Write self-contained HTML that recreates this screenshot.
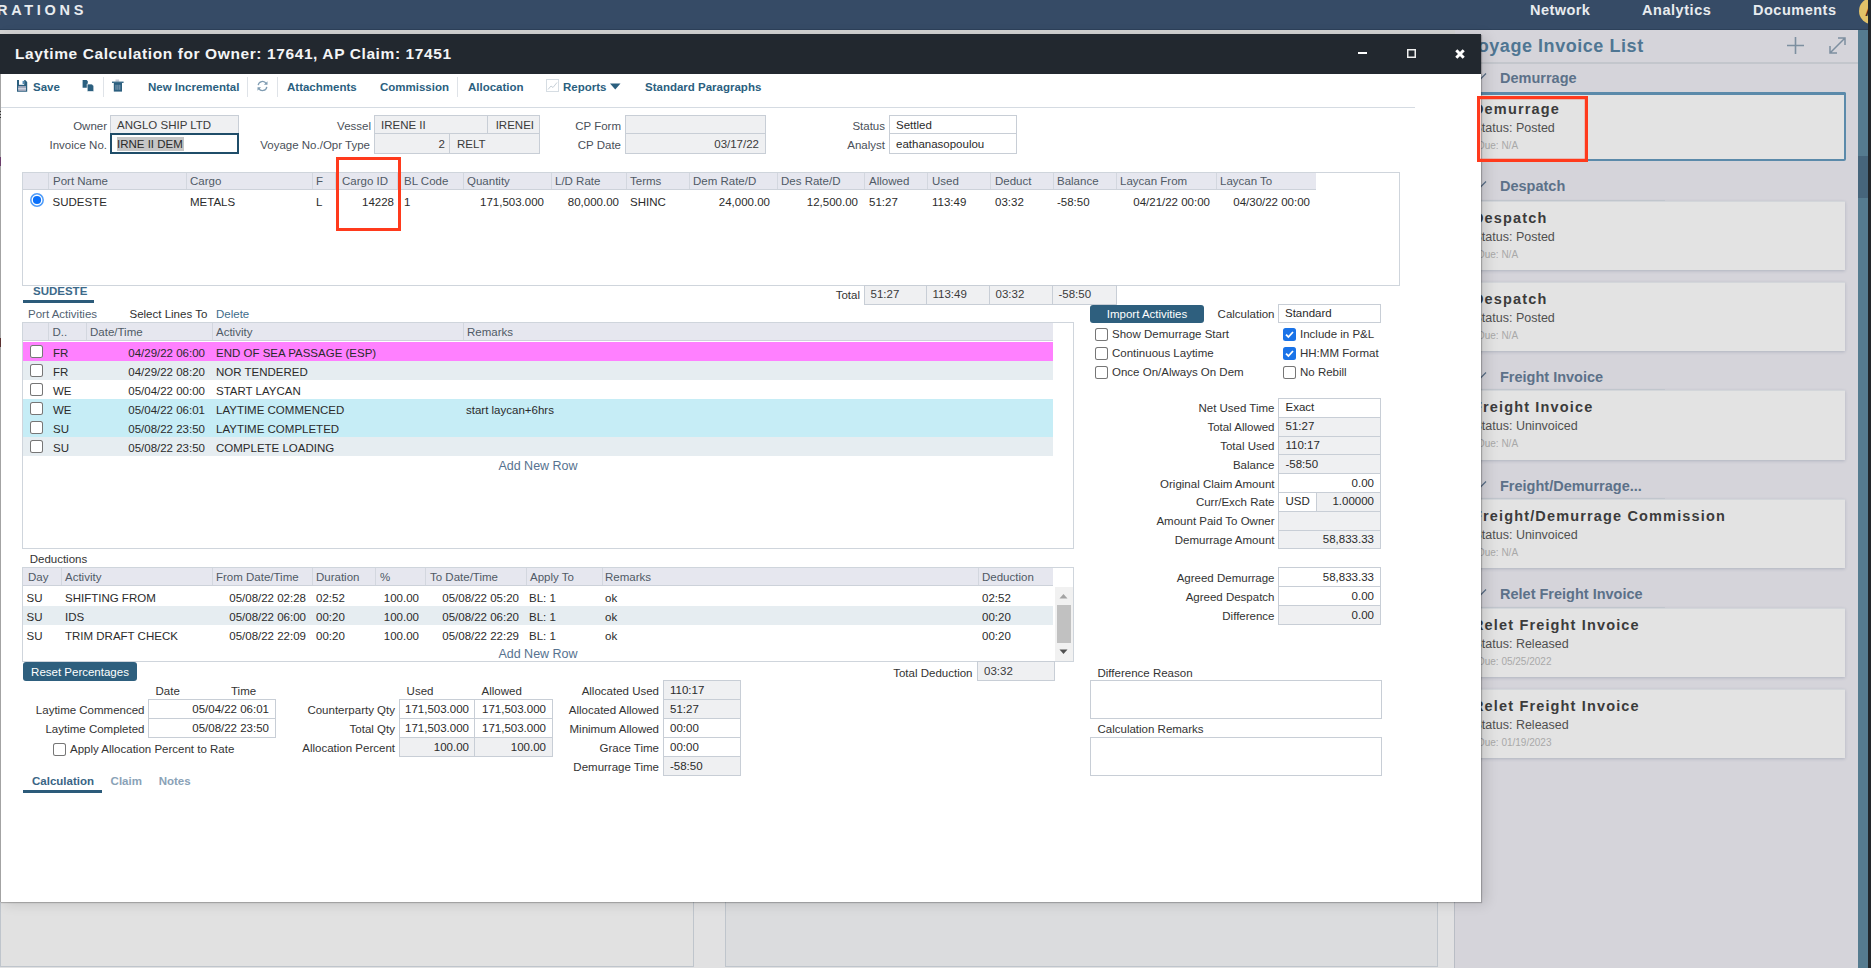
<!DOCTYPE html>
<html><head><meta charset="utf-8"><style>
html,body{margin:0;padding:0;}
body{width:1871px;height:968px;position:relative;overflow:hidden;background:#e3e3e5;font-family:"Liberation Sans",sans-serif;}
.t{position:absolute;white-space:nowrap;line-height:1;}
.r{position:absolute;}
</style></head><body>
<div class="r" style="left:0px;top:30px;width:1455px;height:938px;background:#e1e1e2;"></div>
<div class="r" style="left:0px;top:34px;width:694px;height:933px;background:#e1e1e1;box-shadow:inset 0 0 0 1px #bfc5cc;"></div>
<div class="r" style="left:725px;top:34px;width:713px;height:933px;background:#dbdcde;box-shadow:inset 0 0 0 1px #bfc5cc;"></div>
<div class="r" style="left:1454px;top:30px;width:1px;height:938px;background:#b9bdc5;"></div>
<div class="r" style="left:0px;top:30px;width:1455px;height:4px;background:#d3d3d3;"></div>
<div class="r" style="left:1455px;top:30px;width:404px;height:938px;background:#d5d4da;"></div>
<div class="r" style="left:1858px;top:30px;width:10px;height:938px;background:#557b8f;"></div>
<div class="r" style="left:1858px;top:156px;width:10px;height:42px;background:#46657b;"></div>
<div class="t" style="top:37px;font-size:18px;color:#4f7693;font-weight:700;letter-spacing:0.55px;left:1466.5px;">Voyage Invoice List</div>
<div class="r" style="left:1455px;top:62px;width:403px;height:2px;background:#c3c6cc;"></div>
<svg class="r" style="left:1785px;top:35px" width="21" height="21" viewBox="0 0 21 21"><path d="M10.5 2v17M2 10.5h17" stroke="#7d8fa0" stroke-width="1.6" fill="none"/></svg>
<svg class="r" style="left:1827px;top:35px" width="21" height="21" viewBox="0 0 21 21"><path d="M3 18L18 3M11 3h7v7M3 11v7h7" stroke="#7d8fa0" stroke-width="1.5" fill="none"/></svg>
<div class="t" style="top:71px;font-size:14.5px;color:#5c7189;font-weight:700;left:1500px;">Demurrage</div>
<svg class="r" style="left:1474px;top:72px" width="14" height="9" viewBox="0 0 14 9"><path d="M2 1.5l5 5 5-5" stroke="#5c7189" stroke-width="1.3" fill="none"/></svg>
<div class="r" style="left:1457px;top:92px;width:389px;height:69px;background:#e3e3e3;box-shadow:inset 0 0 0 2px #5b8aaa, inset 0 3px 0 0 #5b8aaa;border-radius:2px;"></div>
<div class="t" style="top:102px;font-size:14.5px;color:#3b3b3b;font-weight:700;letter-spacing:1.15px;left:1473px;">Demurrage</div>
<div class="t" style="top:122px;font-size:12.5px;color:#505050;left:1473.5px;">Status: Posted</div>
<div class="t" style="top:141px;font-size:10px;color:#a9a9a9;left:1477.5px;">Due: N/A</div>
<div class="t" style="top:179px;font-size:14.5px;color:#5c7189;font-weight:700;left:1500px;">Despatch</div>
<svg class="r" style="left:1474px;top:180.4px" width="14" height="9" viewBox="0 0 14 9"><path d="M2 1.5l5 5 5-5" stroke="#5c7189" stroke-width="1.3" fill="none"/></svg>
<div class="r" style="left:1455px;top:200px;width:210px;height:1px;background:#c8ccd2;"></div>
<div class="r" style="left:1457px;top:201px;width:388px;height:69px;background:#e3e3e3;box-shadow:inset 0 1px 0 0 #d3d6da, 0 1px 3px rgba(50,70,100,0.22);"></div>
<div class="t" style="top:211px;font-size:14.5px;color:#3b3b3b;font-weight:700;letter-spacing:1.15px;left:1473px;">Despatch</div>
<div class="t" style="top:231px;font-size:12.5px;color:#505050;left:1473.5px;">Status: Posted</div>
<div class="t" style="top:250px;font-size:10px;color:#a9a9a9;left:1477.5px;">Due: N/A</div>
<div class="r" style="left:1457px;top:282px;width:388px;height:69px;background:#e3e3e3;box-shadow:inset 0 1px 0 0 #d3d6da, 0 1px 3px rgba(50,70,100,0.22);"></div>
<div class="t" style="top:292px;font-size:14.5px;color:#3b3b3b;font-weight:700;letter-spacing:1.15px;left:1473px;">Despatch</div>
<div class="t" style="top:312px;font-size:12.5px;color:#505050;left:1473.5px;">Status: Posted</div>
<div class="t" style="top:331px;font-size:10px;color:#a9a9a9;left:1477.5px;">Due: N/A</div>
<div class="t" style="top:370px;font-size:14.5px;color:#5c7189;font-weight:700;left:1500px;">Freight Invoice</div>
<svg class="r" style="left:1474px;top:370.5px" width="14" height="9" viewBox="0 0 14 9"><path d="M2 1.5l5 5 5-5" stroke="#5c7189" stroke-width="1.3" fill="none"/></svg>
<div class="r" style="left:1455px;top:389px;width:210px;height:1px;background:#c8ccd2;"></div>
<div class="r" style="left:1457px;top:390px;width:388px;height:70px;background:#e3e3e3;box-shadow:inset 0 1px 0 0 #d3d6da, 0 1px 3px rgba(50,70,100,0.22);"></div>
<div class="t" style="top:400px;font-size:14.5px;color:#3b3b3b;font-weight:700;letter-spacing:1.15px;left:1473px;">Freight Invoice</div>
<div class="t" style="top:420px;font-size:12.5px;color:#505050;left:1473.5px;">Status: Uninvoiced</div>
<div class="t" style="top:439px;font-size:10px;color:#a9a9a9;left:1477.5px;">Due: N/A</div>
<div class="t" style="top:479px;font-size:14.5px;color:#5c7189;font-weight:700;left:1500px;">Freight/Demurrage...</div>
<svg class="r" style="left:1474px;top:479.7px" width="14" height="9" viewBox="0 0 14 9"><path d="M2 1.5l5 5 5-5" stroke="#5c7189" stroke-width="1.3" fill="none"/></svg>
<div class="r" style="left:1455px;top:498px;width:210px;height:1px;background:#c8ccd2;"></div>
<div class="r" style="left:1457px;top:499px;width:388px;height:69px;background:#e3e3e3;box-shadow:inset 0 1px 0 0 #d3d6da, 0 1px 3px rgba(50,70,100,0.22);"></div>
<div class="t" style="top:509px;font-size:14.5px;color:#3b3b3b;font-weight:700;letter-spacing:1.15px;left:1473px;">Freight/Demurrage Commission</div>
<div class="t" style="top:529px;font-size:12.5px;color:#505050;left:1473.5px;">Status: Uninvoiced</div>
<div class="t" style="top:548px;font-size:10px;color:#a9a9a9;left:1477.5px;">Due: N/A</div>
<div class="t" style="top:587px;font-size:14.5px;color:#5c7189;font-weight:700;left:1500px;">Relet Freight Invoice</div>
<svg class="r" style="left:1474px;top:587.8px" width="14" height="9" viewBox="0 0 14 9"><path d="M2 1.5l5 5 5-5" stroke="#5c7189" stroke-width="1.3" fill="none"/></svg>
<div class="r" style="left:1455px;top:607px;width:210px;height:1px;background:#c8ccd2;"></div>
<div class="r" style="left:1457px;top:608px;width:388px;height:69px;background:#e3e3e3;box-shadow:inset 0 1px 0 0 #d3d6da, 0 1px 3px rgba(50,70,100,0.22);"></div>
<div class="t" style="top:618px;font-size:14.5px;color:#3b3b3b;font-weight:700;letter-spacing:1.15px;left:1473px;">Relet Freight Invoice</div>
<div class="t" style="top:638px;font-size:12.5px;color:#505050;left:1473.5px;">Status: Released</div>
<div class="t" style="top:657px;font-size:10px;color:#a9a9a9;left:1477.5px;">Due: 05/25/2022</div>
<div class="r" style="left:1457px;top:689px;width:388px;height:69px;background:#e3e3e3;box-shadow:inset 0 1px 0 0 #d3d6da, 0 1px 3px rgba(50,70,100,0.22);"></div>
<div class="t" style="top:699px;font-size:14.5px;color:#3b3b3b;font-weight:700;letter-spacing:1.15px;left:1473px;">Relet Freight Invoice</div>
<div class="t" style="top:719px;font-size:12.5px;color:#505050;left:1473.5px;">Status: Released</div>
<div class="t" style="top:738px;font-size:10px;color:#a9a9a9;left:1477.5px;">Due: 01/19/2023</div>
<div class="r" style="left:0px;top:0px;width:1871px;height:30px;background:#364b66;"></div>
<div class="r" style="left:0px;top:29px;width:1871px;height:1px;background:#2d415a;"></div>
<div class="t" style="top:3px;font-size:14.5px;color:#e8ebef;font-weight:700;letter-spacing:3.7px;left:-3px;">RATIONS</div>
<div class="t" style="top:3px;font-size:14.5px;color:#e8ebef;font-weight:700;letter-spacing:0.45px;left:1530px;">Network</div>
<div class="t" style="top:3px;font-size:14.5px;color:#e8ebef;font-weight:700;letter-spacing:0.55px;left:1642px;">Analytics</div>
<div class="t" style="top:3px;font-size:14.5px;color:#e8ebef;font-weight:700;letter-spacing:0.5px;left:1753px;">Documents</div>
<div class="r" style="left:1859px;top:-2px;width:26px;height:26px;border-radius:50%;background:#e2c168"></div>
<div class="t" style="top:5px;font-size:13px;color:#4a2a20;font-weight:700;left:1865px;">A</div>
<div class="r" style="left:1868px;top:0px;width:3px;height:968px;background:#22272b;"></div>
<div class="r" style="left:0;top:34px;width:1481px;height:868px;background:#fff;box-shadow:1px 1px 1px rgba(0,0,0,0.22), 5px 2px 12px rgba(0,0,0,0.13);"></div>
<div class="r" style="left:0px;top:34px;width:1px;height:868px;background:#a3a3a3;"></div>
<div class="r" style="left:0px;top:111px;width:1px;height:1px;background:#333;"></div>
<div class="r" style="left:0px;top:114px;width:1px;height:1px;background:#333;"></div>
<div class="r" style="left:0px;top:117px;width:1px;height:1px;background:#333;"></div>
<div class="r" style="left:0px;top:157px;width:1px;height:9px;background:#6b3d6b;"></div>
<div class="r" style="left:0px;top:338px;width:1px;height:9px;background:#5a3030;"></div>
<div class="r" style="left:0px;top:34px;width:1481px;height:40px;background:#22282f;"></div>
<div class="t" style="top:46px;font-size:15.5px;color:#f4f5f6;font-weight:700;letter-spacing:0.6px;left:15px;">Laytime Calculation for Owner: 17641, AP Claim: 17451</div>
<div class="r" style="left:1358px;top:52px;width:9px;height:2px;background:#ffffff;"></div>
<div class="r" style="left:1407px;top:49px;width:9px;height:9px;box-shadow:inset 0 0 0 1.5px #f0f0f0;"></div>
<svg class="r" style="left:1454px;top:48px" width="12" height="12" viewBox="0 0 12 12"><path d="M2.3 2.3L9.7 9.7M9.7 2.3L2.3 9.7" stroke="#fff" stroke-width="3" stroke-linecap="butt" fill="none"/></svg>
<svg class="r" style="left:16px;top:80px" width="12" height="12" viewBox="0 0 12 12"><path d="M1 0H9.2L11.2 2V11.7H1Z" fill="#2b5f7f"/><rect x="3" y="0" width="5.2" height="4.8" fill="#fff"/><rect x="6.6" y="0.9" width="1.3" height="3.1" fill="#3f7fb0"/><rect x="2.2" y="6" width="7.8" height="5" fill="#9aa3b8"/><rect x="2.2" y="7.9" width="7.8" height="1.6" fill="#cfd2de"/></svg>
<div class="t" style="top:82px;font-size:11.5px;color:#2b5f7f;font-weight:700;left:33px;">Save</div>
<svg class="r" style="left:82px;top:80px" width="13" height="12" viewBox="0 0 13 12"><path d="M0.6 0H4.6L5.8 1.2V7.8H0.6Z" fill="#2b5f7f"/><path d="M5.2 4H9.8L11.8 6V11.6H5.2Z" fill="#2b5f7f" stroke="#fff" stroke-width="0.7"/></svg>
<div class="r" style="left:103px;top:77px;width:1px;height:20px;background:#dfe3e8;"></div>
<svg class="r" style="left:112px;top:79px" width="12" height="13" viewBox="0 0 12 13"><rect x="3.5" y="0.5" width="3.6" height="2.2" fill="#c9ced8"/><rect x="0" y="2.6" width="11.6" height="1.3" fill="#2b5f7f"/><rect x="1.8" y="3.9" width="8.2" height="8.7" fill="#2b5f7f"/><path d="M4 5.8v5M5.9 5.8v5M7.8 5.8v5" stroke="#8fa6bb" stroke-width="0.9"/></svg>
<div class="t" style="top:82px;font-size:11.5px;color:#2b5f7f;font-weight:700;left:148px;">New Incremental</div>
<div class="r" style="left:247px;top:77px;width:1px;height:20px;background:#dfe3e8;"></div>
<svg class="r" style="left:256px;top:80px" width="13" height="12" viewBox="0 0 13 12"><path d="M2.2 5.2A4.3 4.3 0 0 1 10.2 3.6M10.8 6.8A4.3 4.3 0 0 1 2.8 8.4" stroke="#7f9cb2" stroke-width="1.3" fill="none"/><path d="M11.5 1.2v3.6H7.9z" fill="#7f9cb2"/><path d="M1.5 10.8V7.2h3.6z" fill="#7f9cb2"/></svg>
<div class="r" style="left:277px;top:77px;width:1px;height:20px;background:#dfe3e8;"></div>
<div class="t" style="top:82px;font-size:11.5px;color:#2b5f7f;font-weight:700;left:287px;">Attachments</div>
<div class="t" style="top:82px;font-size:11.5px;color:#2b5f7f;font-weight:700;left:380px;">Commission</div>
<div class="r" style="left:457px;top:77px;width:1px;height:20px;background:#dfe3e8;"></div>
<div class="t" style="top:82px;font-size:11.5px;color:#2b5f7f;font-weight:700;left:468px;">Allocation</div>
<svg class="r" style="left:546px;top:79px" width="13" height="13" viewBox="0 0 13 13"><rect x="0.5" y="0.5" width="12" height="12" fill="none" stroke="#d6dde3"/><path d="M2 10.5l3-3.5 2 1.5 4-5" stroke="#c7d0d8" stroke-width="1" fill="none"/></svg>
<div class="t" style="top:82px;font-size:11.5px;color:#2b5f7f;font-weight:700;left:563px;">Reports</div>
<svg class="r" style="left:610px;top:83px" width="11" height="7" viewBox="0 0 11 7"><path d="M0 0.5h10.5L5.25 6.5z" fill="#2b5f7f"/></svg>
<div class="t" style="top:82px;font-size:11.5px;color:#2b5f7f;font-weight:700;left:645px;">Standard Paragraphs</div>
<div class="r" style="left:1px;top:107px;width:1414px;height:1px;background:#d5dbe2;"></div>
<div class="t" style="top:121px;font-size:11.5px;color:#4a5059;right:1764px;">Owner</div>
<div class="r" style="left:110px;top:115px;width:129px;height:19px;background:#eff0f2;box-shadow:inset 0 0 0 1px #c8ced6;"></div>
<div class="t" style="top:120px;font-size:11.5px;color:#3a3a3a;left:117px;">ANGLO SHIP LTD</div>
<div class="t" style="top:140px;font-size:11.5px;color:#4a5059;right:1764px;">Invoice No.</div>
<div class="r" style="left:110px;top:133px;width:129px;height:21px;background:#fff;box-shadow:inset 0 0 0 2px #1f4d69;"></div>
<div class="r" style="left:117px;top:137px;width:67px;height:14px;background:#c6c6c6;"></div>
<div class="t" style="top:139px;font-size:11.5px;color:#2a2a2a;left:117px;">IRNE II DEM</div>
<div class="t" style="top:121px;font-size:11.5px;color:#4a5059;right:1500px;">Vessel</div>
<div class="r" style="left:374px;top:115px;width:114px;height:19px;background:#eff0f2;box-shadow:inset 0 0 0 1px #c8ced6;"></div>
<div class="r" style="left:487px;top:115px;width:53px;height:19px;background:#eff0f2;box-shadow:inset 0 0 0 1px #c8ced6;"></div>
<div class="t" style="top:120px;font-size:11.5px;color:#3a3a3a;left:381px;">IRENE II</div>
<div class="t" style="top:120px;font-size:11.5px;color:#3a3a3a;right:1337px;">IRENEI</div>
<div class="t" style="top:140px;font-size:11.5px;color:#4a5059;right:1501px;">Voyage No./Opr Type</div>
<div class="r" style="left:374px;top:133px;width:76px;height:21px;background:#eff0f2;box-shadow:inset 0 0 0 1px #c8ced6;"></div>
<div class="r" style="left:449px;top:133px;width:91px;height:21px;background:#eff0f2;box-shadow:inset 0 0 0 1px #c8ced6;"></div>
<div class="t" style="top:139px;font-size:11.5px;color:#3a3a3a;right:1426px;">2</div>
<div class="t" style="top:139px;font-size:11.5px;color:#3a3a3a;left:457px;">RELT</div>
<div class="t" style="top:121px;font-size:11.5px;color:#4a5059;right:1250px;">CP Form</div>
<div class="r" style="left:625px;top:115px;width:141px;height:19px;background:#eff0f2;box-shadow:inset 0 0 0 1px #c8ced6;"></div>
<div class="t" style="top:140px;font-size:11.5px;color:#4a5059;right:1250px;">CP Date</div>
<div class="r" style="left:625px;top:133px;width:141px;height:21px;background:#eff0f2;box-shadow:inset 0 0 0 1px #c8ced6;"></div>
<div class="t" style="top:139px;font-size:11.5px;color:#3a3a3a;right:1112px;">03/17/22</div>
<div class="t" style="top:121px;font-size:11.5px;color:#4a5059;right:986px;">Status</div>
<div class="r" style="left:889px;top:115px;width:128px;height:19px;background:#fff;box-shadow:inset 0 0 0 1px #c8ced6;"></div>
<div class="t" style="top:120px;font-size:11.5px;color:#2a2a2a;left:896px;">Settled</div>
<div class="t" style="top:140px;font-size:11.5px;color:#4a5059;right:986px;">Analyst</div>
<div class="r" style="left:889px;top:133px;width:128px;height:21px;background:#fff;box-shadow:inset 0 0 0 1px #c8ced6;"></div>
<div class="t" style="top:139px;font-size:11.5px;color:#2a2a2a;left:896px;">eathanasopoulou</div>
<div class="r" style="left:22px;top:172px;width:1378px;height:114px;background:#fff;box-shadow:inset 0 0 0 1px #cfd5dc;"></div>
<div class="r" style="left:23px;top:173px;width:1293px;height:16px;background:#e6e7ef;"></div>
<div class="r" style="left:23px;top:189px;width:1293px;height:1px;background:#cdd2da;"></div>
<div class="r" style="left:48px;top:173px;width:1px;height:16px;background:#d3d7df;"></div>
<div class="r" style="left:186px;top:173px;width:1px;height:16px;background:#d3d7df;"></div>
<div class="r" style="left:312px;top:173px;width:1px;height:16px;background:#d3d7df;"></div>
<div class="r" style="left:335px;top:173px;width:1px;height:16px;background:#d3d7df;"></div>
<div class="r" style="left:397px;top:173px;width:1px;height:16px;background:#d3d7df;"></div>
<div class="r" style="left:463px;top:173px;width:1px;height:16px;background:#d3d7df;"></div>
<div class="r" style="left:551px;top:173px;width:1px;height:16px;background:#d3d7df;"></div>
<div class="r" style="left:626px;top:173px;width:1px;height:16px;background:#d3d7df;"></div>
<div class="r" style="left:689px;top:173px;width:1px;height:16px;background:#d3d7df;"></div>
<div class="r" style="left:777px;top:173px;width:1px;height:16px;background:#d3d7df;"></div>
<div class="r" style="left:864px;top:173px;width:1px;height:16px;background:#d3d7df;"></div>
<div class="r" style="left:927px;top:173px;width:1px;height:16px;background:#d3d7df;"></div>
<div class="r" style="left:990px;top:173px;width:1px;height:16px;background:#d3d7df;"></div>
<div class="r" style="left:1053px;top:173px;width:1px;height:16px;background:#d3d7df;"></div>
<div class="r" style="left:1116px;top:173px;width:1px;height:16px;background:#d3d7df;"></div>
<div class="r" style="left:1216px;top:173px;width:1px;height:16px;background:#d3d7df;"></div>
<div class="t" style="top:176px;font-size:11.5px;color:#505a66;left:53px;">Port Name</div>
<div class="t" style="top:176px;font-size:11.5px;color:#505a66;left:190px;">Cargo</div>
<div class="t" style="top:176px;font-size:11.5px;color:#505a66;left:316px;">F</div>
<div class="t" style="top:176px;font-size:11.5px;color:#505a66;left:342px;">Cargo ID</div>
<div class="t" style="top:176px;font-size:11.5px;color:#505a66;left:404px;">BL Code</div>
<div class="t" style="top:176px;font-size:11.5px;color:#505a66;left:467px;">Quantity</div>
<div class="t" style="top:176px;font-size:11.5px;color:#505a66;left:555px;">L/D Rate</div>
<div class="t" style="top:176px;font-size:11.5px;color:#505a66;left:630px;">Terms</div>
<div class="t" style="top:176px;font-size:11.5px;color:#505a66;left:693px;">Dem Rate/D</div>
<div class="t" style="top:176px;font-size:11.5px;color:#505a66;left:781px;">Des Rate/D</div>
<div class="t" style="top:176px;font-size:11.5px;color:#505a66;left:869px;">Allowed</div>
<div class="t" style="top:176px;font-size:11.5px;color:#505a66;left:932px;">Used</div>
<div class="t" style="top:176px;font-size:11.5px;color:#505a66;left:995px;">Deduct</div>
<div class="t" style="top:176px;font-size:11.5px;color:#505a66;left:1057px;">Balance</div>
<div class="t" style="top:176px;font-size:11.5px;color:#505a66;left:1120px;">Laycan From</div>
<div class="t" style="top:176px;font-size:11.5px;color:#505a66;left:1220px;">Laycan To</div>
<svg class="r" style="left:30px;top:193px" width="14" height="14" viewBox="0 0 14 14"><circle cx="7" cy="7" r="6.2" fill="#fff" stroke="#4f9cf9" stroke-width="1.5"/><circle cx="7" cy="7" r="4.1" fill="#0a70fa"/></svg>
<div class="t" style="top:197px;font-size:11.5px;color:#2b2b2b;left:52.5px;">SUDESTE</div>
<div class="t" style="top:197px;font-size:11.5px;color:#2b2b2b;left:190px;">METALS</div>
<div class="t" style="top:197px;font-size:11.5px;color:#2b2b2b;left:316px;">L</div>
<div class="t" style="top:197px;font-size:11.5px;color:#2b2b2b;right:1477px;">14228</div>
<div class="t" style="top:197px;font-size:11.5px;color:#2b2b2b;left:404px;">1</div>
<div class="t" style="top:197px;font-size:11.5px;color:#2b2b2b;right:1327px;">171,503.000</div>
<div class="t" style="top:197px;font-size:11.5px;color:#2b2b2b;right:1252px;">80,000.00</div>
<div class="t" style="top:197px;font-size:11.5px;color:#2b2b2b;left:630px;">SHINC</div>
<div class="t" style="top:197px;font-size:11.5px;color:#2b2b2b;right:1101px;">24,000.00</div>
<div class="t" style="top:197px;font-size:11.5px;color:#2b2b2b;right:1013px;">12,500.00</div>
<div class="t" style="top:197px;font-size:11.5px;color:#2b2b2b;left:869px;">51:27</div>
<div class="t" style="top:197px;font-size:11.5px;color:#2b2b2b;left:932px;">113:49</div>
<div class="t" style="top:197px;font-size:11.5px;color:#2b2b2b;left:995px;">03:32</div>
<div class="t" style="top:197px;font-size:11.5px;color:#2b2b2b;left:1057px;">-58:50</div>
<div class="t" style="top:197px;font-size:11.5px;color:#2b2b2b;right:661px;">04/21/22 00:00</div>
<div class="t" style="top:197px;font-size:11.5px;color:#2b2b2b;right:561px;">04/30/22 00:00</div>
<div class="t" style="top:290px;font-size:11.5px;color:#333;right:1011px;">Total</div>
<div class="r" style="left:864px;top:285px;width:63px;height:20px;background:#eff0f2;box-shadow:inset 0 0 0 1px #c8ced6;"></div>
<div class="t" style="top:289px;font-size:11.5px;color:#3a3a3a;left:870.5px;">51:27</div>
<div class="r" style="left:926px;top:285px;width:64px;height:20px;background:#eff0f2;box-shadow:inset 0 0 0 1px #c8ced6;"></div>
<div class="t" style="top:289px;font-size:11.5px;color:#3a3a3a;left:932.5px;">113:49</div>
<div class="r" style="left:989px;top:285px;width:64px;height:20px;background:#eff0f2;box-shadow:inset 0 0 0 1px #c8ced6;"></div>
<div class="t" style="top:289px;font-size:11.5px;color:#3a3a3a;left:995.5px;">03:32</div>
<div class="r" style="left:1052px;top:285px;width:65px;height:20px;background:#eff0f2;box-shadow:inset 0 0 0 1px #c8ced6;"></div>
<div class="t" style="top:289px;font-size:11.5px;color:#3a3a3a;left:1058.5px;">-58:50</div>
<div class="r" style="left:336px;top:157px;width:65px;height:74px;box-shadow:inset 0 0 0 3px #ff3a1c;"></div>
<div class="t" style="top:286px;font-size:11.5px;color:#3d6a8a;font-weight:700;left:33px;">SUDESTE</div>
<div class="r" style="left:23px;top:300px;width:71px;height:3px;background:#2c5b7a;"></div>
<div class="t" style="top:309px;font-size:11.5px;color:#526272;left:28px;">Port Activities</div>
<div class="t" style="top:309px;font-size:11.5px;color:#2f2f2f;left:129.5px;">Select Lines To</div>
<div class="t" style="top:309px;font-size:11.5px;color:#3f6d8c;left:216px;">Delete</div>
<div class="r" style="left:22px;top:322px;width:1052px;height:227px;background:#fff;box-shadow:inset 0 0 0 1px #cfd5dc;"></div>
<div class="r" style="left:23px;top:323px;width:1030px;height:17px;background:#e6e7ef;"></div>
<div class="r" style="left:23px;top:340px;width:1030px;height:1px;background:#cdd2da;"></div>
<div class="r" style="left:48px;top:323px;width:1px;height:17px;background:#d3d7df;"></div>
<div class="r" style="left:86px;top:323px;width:1px;height:17px;background:#d3d7df;"></div>
<div class="r" style="left:212px;top:323px;width:1px;height:17px;background:#d3d7df;"></div>
<div class="r" style="left:463px;top:323px;width:1px;height:17px;background:#d3d7df;"></div>
<div class="t" style="top:327px;font-size:11.5px;color:#505a66;left:52.5px;">D..</div>
<div class="t" style="top:327px;font-size:11.5px;color:#505a66;left:90px;">Date/Time</div>
<div class="t" style="top:327px;font-size:11.5px;color:#505a66;left:216px;">Activity</div>
<div class="t" style="top:327px;font-size:11.5px;color:#505a66;left:467px;">Remarks</div>
<div class="r" style="left:23px;top:342px;width:1030px;height:19px;background:#ff80ff;"></div>
<div class="r" style="left:30px;top:344.5px;width:13px;height:13px;border-radius:2.5px;background:#fff;box-shadow:inset 0 0 0 1px #767676;"></div>
<div class="t" style="top:348px;font-size:11.5px;color:#2b2b2b;left:53px;">FR</div>
<div class="t" style="top:348px;font-size:11.5px;color:#2b2b2b;right:1666px;">04/29/22 06:00</div>
<div class="t" style="top:348px;font-size:11.5px;color:#2b2b2b;left:216px;">END OF SEA PASSAGE (ESP)</div>
<div class="r" style="left:23px;top:361px;width:1030px;height:19px;background:#e6edf1;"></div>
<div class="r" style="left:30px;top:363.5px;width:13px;height:13px;border-radius:2.5px;background:#fff;box-shadow:inset 0 0 0 1px #767676;"></div>
<div class="t" style="top:367px;font-size:11.5px;color:#2b2b2b;left:53px;">FR</div>
<div class="t" style="top:367px;font-size:11.5px;color:#2b2b2b;right:1666px;">04/29/22 08:20</div>
<div class="t" style="top:367px;font-size:11.5px;color:#2b2b2b;left:216px;">NOR TENDERED</div>
<div class="r" style="left:23px;top:380px;width:1030px;height:19px;background:#ffffff;"></div>
<div class="r" style="left:30px;top:382.5px;width:13px;height:13px;border-radius:2.5px;background:#fff;box-shadow:inset 0 0 0 1px #767676;"></div>
<div class="t" style="top:386px;font-size:11.5px;color:#2b2b2b;left:53px;">WE</div>
<div class="t" style="top:386px;font-size:11.5px;color:#2b2b2b;right:1666px;">05/04/22 00:00</div>
<div class="t" style="top:386px;font-size:11.5px;color:#2b2b2b;left:216px;">START LAYCAN</div>
<div class="r" style="left:23px;top:399px;width:1030px;height:19px;background:#c6edf6;"></div>
<div class="r" style="left:30px;top:401.5px;width:13px;height:13px;border-radius:2.5px;background:#fff;box-shadow:inset 0 0 0 1px #767676;"></div>
<div class="t" style="top:405px;font-size:11.5px;color:#2b2b2b;left:53px;">WE</div>
<div class="t" style="top:405px;font-size:11.5px;color:#2b2b2b;right:1666px;">05/04/22 06:01</div>
<div class="t" style="top:405px;font-size:11.5px;color:#2b2b2b;left:216px;">LAYTIME COMMENCED</div>
<div class="t" style="top:405px;font-size:11.5px;color:#2b2b2b;left:466px;">start laycan+6hrs</div>
<div class="r" style="left:23px;top:418px;width:1030px;height:19px;background:#c6edf6;"></div>
<div class="r" style="left:30px;top:420.5px;width:13px;height:13px;border-radius:2.5px;background:#fff;box-shadow:inset 0 0 0 1px #767676;"></div>
<div class="t" style="top:424px;font-size:11.5px;color:#2b2b2b;left:53px;">SU</div>
<div class="t" style="top:424px;font-size:11.5px;color:#2b2b2b;right:1666px;">05/08/22 23:50</div>
<div class="t" style="top:424px;font-size:11.5px;color:#2b2b2b;left:216px;">LAYTIME COMPLETED</div>
<div class="r" style="left:23px;top:437px;width:1030px;height:19px;background:#e6edf1;"></div>
<div class="r" style="left:30px;top:439.5px;width:13px;height:13px;border-radius:2.5px;background:#fff;box-shadow:inset 0 0 0 1px #767676;"></div>
<div class="t" style="top:443px;font-size:11.5px;color:#2b2b2b;left:53px;">SU</div>
<div class="t" style="top:443px;font-size:11.5px;color:#2b2b2b;right:1666px;">05/08/22 23:50</div>
<div class="t" style="top:443px;font-size:11.5px;color:#2b2b2b;left:216px;">COMPLETE LOADING</div>
<div class="t" style="top:460px;font-size:12.5px;color:#56728f;left:238px;width:600px;text-align:center;">Add New Row</div>
<div class="r" style="left:1090px;top:305px;width:114px;height:18px;background:#2e5f7e;border-radius:3px;"></div>
<div class="t" style="top:309px;font-size:11.5px;color:#ffffff;left:847px;width:600px;text-align:center;">Import Activities</div>
<div class="t" style="top:309px;font-size:11.5px;color:#333;right:596.5px;">Calculation</div>
<div class="r" style="left:1278px;top:304px;width:103px;height:19px;background:#fff;box-shadow:inset 0 0 0 1px #c8ced6;"></div>
<div class="t" style="top:308px;font-size:11.5px;color:#2a2a2a;left:1285px;">Standard</div>
<div class="r" style="left:1095px;top:328px;width:13px;height:13px;border-radius:2.5px;background:#fff;box-shadow:inset 0 0 0 1px #767676;"></div>
<div class="t" style="top:329px;font-size:11.5px;color:#333;left:1112px;">Show Demurrage Start</div>
<svg class="r" style="left:1283px;top:328px" width="13" height="13" viewBox="0 0 13 13"><rect x="0" y="0" width="13" height="13" rx="2.5" fill="#1a73e8"/><path d="M3 6.6l2.4 2.4 4.6-5" stroke="#fff" stroke-width="1.8" fill="none"/></svg>
<div class="t" style="top:329px;font-size:11.5px;color:#333;left:1300px;">Include in P&amp;L</div>
<div class="r" style="left:1095px;top:347px;width:13px;height:13px;border-radius:2.5px;background:#fff;box-shadow:inset 0 0 0 1px #767676;"></div>
<div class="t" style="top:348px;font-size:11.5px;color:#333;left:1112px;">Continuous Laytime</div>
<svg class="r" style="left:1283px;top:347px" width="13" height="13" viewBox="0 0 13 13"><rect x="0" y="0" width="13" height="13" rx="2.5" fill="#1a73e8"/><path d="M3 6.6l2.4 2.4 4.6-5" stroke="#fff" stroke-width="1.8" fill="none"/></svg>
<div class="t" style="top:348px;font-size:11.5px;color:#333;left:1300px;">HH:MM Format</div>
<div class="r" style="left:1095px;top:366px;width:13px;height:13px;border-radius:2.5px;background:#fff;box-shadow:inset 0 0 0 1px #767676;"></div>
<div class="t" style="top:367px;font-size:11.5px;color:#333;left:1112px;">Once On/Always On Dem</div>
<div class="r" style="left:1283px;top:366px;width:13px;height:13px;border-radius:2.5px;background:#fff;box-shadow:inset 0 0 0 1px #767676;"></div>
<div class="t" style="top:367px;font-size:11.5px;color:#333;left:1300px;">No Rebill</div>
<div class="t" style="top:403px;font-size:11.5px;color:#333;right:596.5px;">Net Used Time</div>
<div class="r" style="left:1278px;top:398px;width:103px;height:20px;background:#fff;box-shadow:inset 0 0 0 1px #c8ced6;"></div>
<div class="t" style="top:402px;font-size:11.5px;color:#2a2a2a;left:1285.5px;">Exact</div>
<div class="t" style="top:422px;font-size:11.5px;color:#333;right:596.5px;">Total Allowed</div>
<div class="r" style="left:1278px;top:417px;width:103px;height:20px;background:#eff0f2;box-shadow:inset 0 0 0 1px #c8ced6;"></div>
<div class="t" style="top:421px;font-size:11.5px;color:#2a2a2a;left:1285.5px;">51:27</div>
<div class="t" style="top:441px;font-size:11.5px;color:#333;right:596.5px;">Total Used</div>
<div class="r" style="left:1278px;top:436px;width:103px;height:19px;background:#eff0f2;box-shadow:inset 0 0 0 1px #c8ced6;"></div>
<div class="t" style="top:440px;font-size:11.5px;color:#2a2a2a;left:1285.5px;">110:17</div>
<div class="t" style="top:460px;font-size:11.5px;color:#333;right:596.5px;">Balance</div>
<div class="r" style="left:1278px;top:454px;width:103px;height:20px;background:#eff0f2;box-shadow:inset 0 0 0 1px #c8ced6;"></div>
<div class="t" style="top:459px;font-size:11.5px;color:#2a2a2a;left:1285.5px;">-58:50</div>
<div class="t" style="top:479px;font-size:11.5px;color:#333;right:596.5px;">Original Claim Amount</div>
<div class="r" style="left:1278px;top:473px;width:103px;height:20px;background:#fff;box-shadow:inset 0 0 0 1px #c8ced6;"></div>
<div class="t" style="top:478px;font-size:11.5px;color:#2a2a2a;right:497px;">0.00</div>
<div class="t" style="top:497px;font-size:11.5px;color:#333;right:596.5px;">Curr/Exch Rate</div>
<div class="r" style="left:1278px;top:492px;width:103px;height:20px;background:#eff0f2;box-shadow:inset 0 0 0 1px #c8ced6;"></div>
<div class="r" style="left:1278px;top:492px;width:39px;height:20px;background:#fff;box-shadow:inset 0 0 0 1px #c8ced6;"></div>
<div class="t" style="top:496px;font-size:11.5px;color:#2a2a2a;left:1285.5px;">USD</div>
<div class="t" style="top:496px;font-size:11.5px;color:#2a2a2a;right:497px;">1.00000</div>
<div class="t" style="top:516px;font-size:11.5px;color:#333;right:596.5px;">Amount Paid To Owner</div>
<div class="r" style="left:1278px;top:511px;width:103px;height:20px;background:#eff0f2;box-shadow:inset 0 0 0 1px #c8ced6;"></div>
<div class="t" style="top:515px;font-size:11.5px;color:#2a2a2a;left:1285.5px;"></div>
<div class="t" style="top:535px;font-size:11.5px;color:#333;right:596.5px;">Demurrage Amount</div>
<div class="r" style="left:1278px;top:530px;width:103px;height:19px;background:#eff0f2;box-shadow:inset 0 0 0 1px #c8ced6;"></div>
<div class="t" style="top:534px;font-size:11.5px;color:#2a2a2a;right:497px;">58,833.33</div>
<div class="t" style="top:573px;font-size:11.5px;color:#333;right:596.5px;">Agreed Demurrage</div>
<div class="r" style="left:1278px;top:567px;width:103px;height:20px;background:#fff;box-shadow:inset 0 0 0 1px #c8ced6;"></div>
<div class="t" style="top:572px;font-size:11.5px;color:#2a2a2a;right:497px;">58,833.33</div>
<div class="t" style="top:592px;font-size:11.5px;color:#333;right:596.5px;">Agreed Despatch</div>
<div class="r" style="left:1278px;top:586px;width:103px;height:20px;background:#fff;box-shadow:inset 0 0 0 1px #c8ced6;"></div>
<div class="t" style="top:591px;font-size:11.5px;color:#2a2a2a;right:497px;">0.00</div>
<div class="t" style="top:611px;font-size:11.5px;color:#333;right:596.5px;">Difference</div>
<div class="r" style="left:1278px;top:605px;width:103px;height:20px;background:#eff0f2;box-shadow:inset 0 0 0 1px #c8ced6;"></div>
<div class="t" style="top:610px;font-size:11.5px;color:#2a2a2a;right:497px;">0.00</div>
<div class="t" style="top:668px;font-size:11.5px;color:#333;left:1097.5px;">Difference Reason</div>
<div class="r" style="left:1090px;top:680px;width:292px;height:39px;background:#fff;box-shadow:inset 0 0 0 1px #c8ced6;"></div>
<div class="t" style="top:724px;font-size:11.5px;color:#333;left:1097.5px;">Calculation Remarks</div>
<div class="r" style="left:1090px;top:737px;width:292px;height:39px;background:#fff;box-shadow:inset 0 0 0 1px #c8ced6;"></div>
<div class="t" style="top:554px;font-size:11.5px;color:#333;left:29.7px;">Deductions</div>
<div class="r" style="left:22px;top:567px;width:1052px;height:95px;background:#fff;box-shadow:inset 0 0 0 1px #cfd5dc;"></div>
<div class="r" style="left:23px;top:568px;width:1030px;height:17px;background:#e6e7ef;"></div>
<div class="r" style="left:23px;top:585px;width:1030px;height:1px;background:#cdd2da;"></div>
<div class="r" style="left:61px;top:568px;width:1px;height:17px;background:#d3d7df;"></div>
<div class="r" style="left:212px;top:568px;width:1px;height:17px;background:#d3d7df;"></div>
<div class="r" style="left:312px;top:568px;width:1px;height:17px;background:#d3d7df;"></div>
<div class="r" style="left:375px;top:568px;width:1px;height:17px;background:#d3d7df;"></div>
<div class="r" style="left:425px;top:568px;width:1px;height:17px;background:#d3d7df;"></div>
<div class="r" style="left:526px;top:568px;width:1px;height:17px;background:#d3d7df;"></div>
<div class="r" style="left:602px;top:568px;width:1px;height:17px;background:#d3d7df;"></div>
<div class="r" style="left:978px;top:568px;width:1px;height:17px;background:#d3d7df;"></div>
<div class="t" style="top:572px;font-size:11.5px;color:#505a66;left:28px;">Day</div>
<div class="t" style="top:572px;font-size:11.5px;color:#505a66;left:65px;">Activity</div>
<div class="t" style="top:572px;font-size:11.5px;color:#505a66;left:216px;">From Date/Time</div>
<div class="t" style="top:572px;font-size:11.5px;color:#505a66;left:316px;">Duration</div>
<div class="t" style="top:572px;font-size:11.5px;color:#505a66;left:380px;">%</div>
<div class="t" style="top:572px;font-size:11.5px;color:#505a66;left:430px;">To Date/Time</div>
<div class="t" style="top:572px;font-size:11.5px;color:#505a66;left:530px;">Apply To</div>
<div class="t" style="top:572px;font-size:11.5px;color:#505a66;left:605px;">Remarks</div>
<div class="t" style="top:572px;font-size:11.5px;color:#505a66;left:982px;">Deduction</div>
<div class="r" style="left:23px;top:587px;width:1030px;height:19px;background:#fff;"></div>
<div class="t" style="top:593px;font-size:11.5px;color:#2b2b2b;left:26.5px;">SU</div>
<div class="t" style="top:593px;font-size:11.5px;color:#2b2b2b;left:65px;">SHIFTING FROM</div>
<div class="t" style="top:593px;font-size:11.5px;color:#2b2b2b;right:1565px;">05/08/22 02:28</div>
<div class="t" style="top:593px;font-size:11.5px;color:#2b2b2b;left:316px;">02:52</div>
<div class="t" style="top:593px;font-size:11.5px;color:#2b2b2b;right:1452px;">100.00</div>
<div class="t" style="top:593px;font-size:11.5px;color:#2b2b2b;right:1352px;">05/08/22 05:20</div>
<div class="t" style="top:593px;font-size:11.5px;color:#2b2b2b;left:529px;">BL: 1</div>
<div class="t" style="top:593px;font-size:11.5px;color:#2b2b2b;left:605px;">ok</div>
<div class="t" style="top:593px;font-size:11.5px;color:#2b2b2b;left:982px;">02:52</div>
<div class="r" style="left:23px;top:606px;width:1030px;height:19px;background:#e6edf1;"></div>
<div class="t" style="top:612px;font-size:11.5px;color:#2b2b2b;left:26.5px;">SU</div>
<div class="t" style="top:612px;font-size:11.5px;color:#2b2b2b;left:65px;">IDS</div>
<div class="t" style="top:612px;font-size:11.5px;color:#2b2b2b;right:1565px;">05/08/22 06:00</div>
<div class="t" style="top:612px;font-size:11.5px;color:#2b2b2b;left:316px;">00:20</div>
<div class="t" style="top:612px;font-size:11.5px;color:#2b2b2b;right:1452px;">100.00</div>
<div class="t" style="top:612px;font-size:11.5px;color:#2b2b2b;right:1352px;">05/08/22 06:20</div>
<div class="t" style="top:612px;font-size:11.5px;color:#2b2b2b;left:529px;">BL: 1</div>
<div class="t" style="top:612px;font-size:11.5px;color:#2b2b2b;left:605px;">ok</div>
<div class="t" style="top:612px;font-size:11.5px;color:#2b2b2b;left:982px;">00:20</div>
<div class="r" style="left:23px;top:625px;width:1030px;height:19px;background:#fff;"></div>
<div class="t" style="top:631px;font-size:11.5px;color:#2b2b2b;left:26.5px;">SU</div>
<div class="t" style="top:631px;font-size:11.5px;color:#2b2b2b;left:65px;">TRIM DRAFT CHECK</div>
<div class="t" style="top:631px;font-size:11.5px;color:#2b2b2b;right:1565px;">05/08/22 22:09</div>
<div class="t" style="top:631px;font-size:11.5px;color:#2b2b2b;left:316px;">00:20</div>
<div class="t" style="top:631px;font-size:11.5px;color:#2b2b2b;right:1452px;">100.00</div>
<div class="t" style="top:631px;font-size:11.5px;color:#2b2b2b;right:1352px;">05/08/22 22:29</div>
<div class="t" style="top:631px;font-size:11.5px;color:#2b2b2b;left:529px;">BL: 1</div>
<div class="t" style="top:631px;font-size:11.5px;color:#2b2b2b;left:605px;">ok</div>
<div class="t" style="top:631px;font-size:11.5px;color:#2b2b2b;left:982px;">00:20</div>
<div class="t" style="top:648px;font-size:12.5px;color:#56728f;left:238px;width:600px;text-align:center;">Add New Row</div>
<div class="r" style="left:1055px;top:587px;width:18px;height:74px;background:#f1f1f1;"></div>
<div class="r" style="left:1057px;top:605px;width:14px;height:38px;background:#c1c1c1;"></div>
<svg class="r" style="left:1059px;top:593px" width="9" height="6" viewBox="0 0 9 6"><path d="M0.5 5.5L4.5 1l4 4.5z" fill="#a3a3a3"/></svg>
<svg class="r" style="left:1059px;top:649px" width="9" height="6" viewBox="0 0 9 6"><path d="M0.5 0.5h8L4.5 5z" fill="#505050"/></svg>
<div class="t" style="top:668px;font-size:11.5px;color:#333;right:898.5px;">Total Deduction</div>
<div class="r" style="left:977px;top:661px;width:78px;height:20px;background:#eff0f2;box-shadow:inset 0 0 0 1px #c8ced6;"></div>
<div class="t" style="top:666px;font-size:11.5px;color:#3a3a3a;left:984px;">03:32</div>
<div class="r" style="left:23px;top:662px;width:114px;height:19px;background:#2e5f7e;border-radius:3px;"></div>
<div class="t" style="top:667px;font-size:11.5px;color:#ffffff;left:-220px;width:600px;text-align:center;">Reset Percentages</div>
<div class="t" style="top:686px;font-size:11.5px;color:#333;left:155.5px;">Date</div>
<div class="t" style="top:686px;font-size:11.5px;color:#333;left:231px;">Time</div>
<div class="t" style="top:705px;font-size:11.5px;color:#333;right:1726.5px;">Laytime Commenced</div>
<div class="r" style="left:148px;top:699px;width:128px;height:20px;background:#fff;box-shadow:inset 0 0 0 1px #c8ced6;"></div>
<div class="t" style="top:704px;font-size:11.5px;color:#2a2a2a;right:1602px;">05/04/22 06:01</div>
<div class="t" style="top:724px;font-size:11.5px;color:#333;right:1726.5px;">Laytime Completed</div>
<div class="r" style="left:148px;top:718px;width:128px;height:20px;background:#fff;box-shadow:inset 0 0 0 1px #c8ced6;"></div>
<div class="t" style="top:723px;font-size:11.5px;color:#2a2a2a;right:1602px;">05/08/22 23:50</div>
<div class="r" style="left:53px;top:742.5px;width:13px;height:13px;border-radius:2.5px;background:#fff;box-shadow:inset 0 0 0 1px #767676;"></div>
<div class="t" style="top:744px;font-size:11.5px;color:#333;left:70px;">Apply Allocation Percent to Rate</div>
<div class="t" style="top:686px;font-size:11.5px;color:#333;left:406.6px;">Used</div>
<div class="t" style="top:686px;font-size:11.5px;color:#333;left:481.6px;">Allowed</div>
<div class="t" style="top:705px;font-size:11.5px;color:#333;right:1476px;">Counterparty Qty</div>
<div class="r" style="left:399px;top:699px;width:76px;height:20px;background:#fff;box-shadow:inset 0 0 0 1px #c8ced6;"></div>
<div class="r" style="left:474px;top:699px;width:79px;height:20px;background:#fff;box-shadow:inset 0 0 0 1px #c8ced6;"></div>
<div class="t" style="top:704px;font-size:11.5px;color:#2a2a2a;right:1402px;">171,503.000</div>
<div class="t" style="top:704px;font-size:11.5px;color:#2a2a2a;right:1325px;">171,503.000</div>
<div class="t" style="top:724px;font-size:11.5px;color:#333;right:1476px;">Total Qty</div>
<div class="r" style="left:399px;top:718px;width:76px;height:20px;background:#fff;box-shadow:inset 0 0 0 1px #c8ced6;"></div>
<div class="r" style="left:474px;top:718px;width:79px;height:20px;background:#fff;box-shadow:inset 0 0 0 1px #c8ced6;"></div>
<div class="t" style="top:723px;font-size:11.5px;color:#2a2a2a;right:1402px;">171,503.000</div>
<div class="t" style="top:723px;font-size:11.5px;color:#2a2a2a;right:1325px;">171,503.000</div>
<div class="t" style="top:743px;font-size:11.5px;color:#333;right:1476px;">Allocation Percent</div>
<div class="r" style="left:399px;top:737px;width:76px;height:20px;background:#eff0f2;box-shadow:inset 0 0 0 1px #c8ced6;"></div>
<div class="r" style="left:474px;top:737px;width:79px;height:20px;background:#eff0f2;box-shadow:inset 0 0 0 1px #c8ced6;"></div>
<div class="t" style="top:742px;font-size:11.5px;color:#2a2a2a;right:1402px;">100.00</div>
<div class="t" style="top:742px;font-size:11.5px;color:#2a2a2a;right:1325px;">100.00</div>
<div class="t" style="top:686px;font-size:11.5px;color:#333;right:1212px;">Allocated Used</div>
<div class="r" style="left:663px;top:680px;width:78px;height:20px;background:#eff0f2;box-shadow:inset 0 0 0 1px #c8ced6;"></div>
<div class="t" style="top:685px;font-size:11.5px;color:#2a2a2a;left:670px;">110:17</div>
<div class="t" style="top:705px;font-size:11.5px;color:#333;right:1212px;">Allocated Allowed</div>
<div class="r" style="left:663px;top:699px;width:78px;height:20px;background:#eff0f2;box-shadow:inset 0 0 0 1px #c8ced6;"></div>
<div class="t" style="top:704px;font-size:11.5px;color:#2a2a2a;left:670px;">51:27</div>
<div class="t" style="top:724px;font-size:11.5px;color:#333;right:1212px;">Minimum Allowed</div>
<div class="r" style="left:663px;top:718px;width:78px;height:20px;background:#fff;box-shadow:inset 0 0 0 1px #c8ced6;"></div>
<div class="t" style="top:723px;font-size:11.5px;color:#2a2a2a;left:670px;">00:00</div>
<div class="t" style="top:743px;font-size:11.5px;color:#333;right:1212px;">Grace Time</div>
<div class="r" style="left:663px;top:737px;width:78px;height:20px;background:#fff;box-shadow:inset 0 0 0 1px #c8ced6;"></div>
<div class="t" style="top:742px;font-size:11.5px;color:#2a2a2a;left:670px;">00:00</div>
<div class="t" style="top:762px;font-size:11.5px;color:#333;right:1212px;">Demurrage Time</div>
<div class="r" style="left:663px;top:756px;width:78px;height:20px;background:#eff0f2;box-shadow:inset 0 0 0 1px #c8ced6;"></div>
<div class="t" style="top:761px;font-size:11.5px;color:#2a2a2a;left:670px;">-58:50</div>
<div class="t" style="top:776px;font-size:11.5px;color:#3a6585;font-weight:700;left:32px;">Calculation</div>
<div class="t" style="top:776px;font-size:11.5px;color:#8aa2b7;font-weight:700;left:110.6px;">Claim</div>
<div class="t" style="top:776px;font-size:11.5px;color:#8aa2b7;font-weight:700;left:158.7px;">Notes</div>
<div class="r" style="left:23px;top:790px;width:79px;height:3px;background:#2c5b7a;"></div>
<div class="r" style="left:1477px;top:96px;width:111px;height:66px;box-shadow:inset 0 0 0 3.2px #ff3a1c;"></div>
</body></html>
